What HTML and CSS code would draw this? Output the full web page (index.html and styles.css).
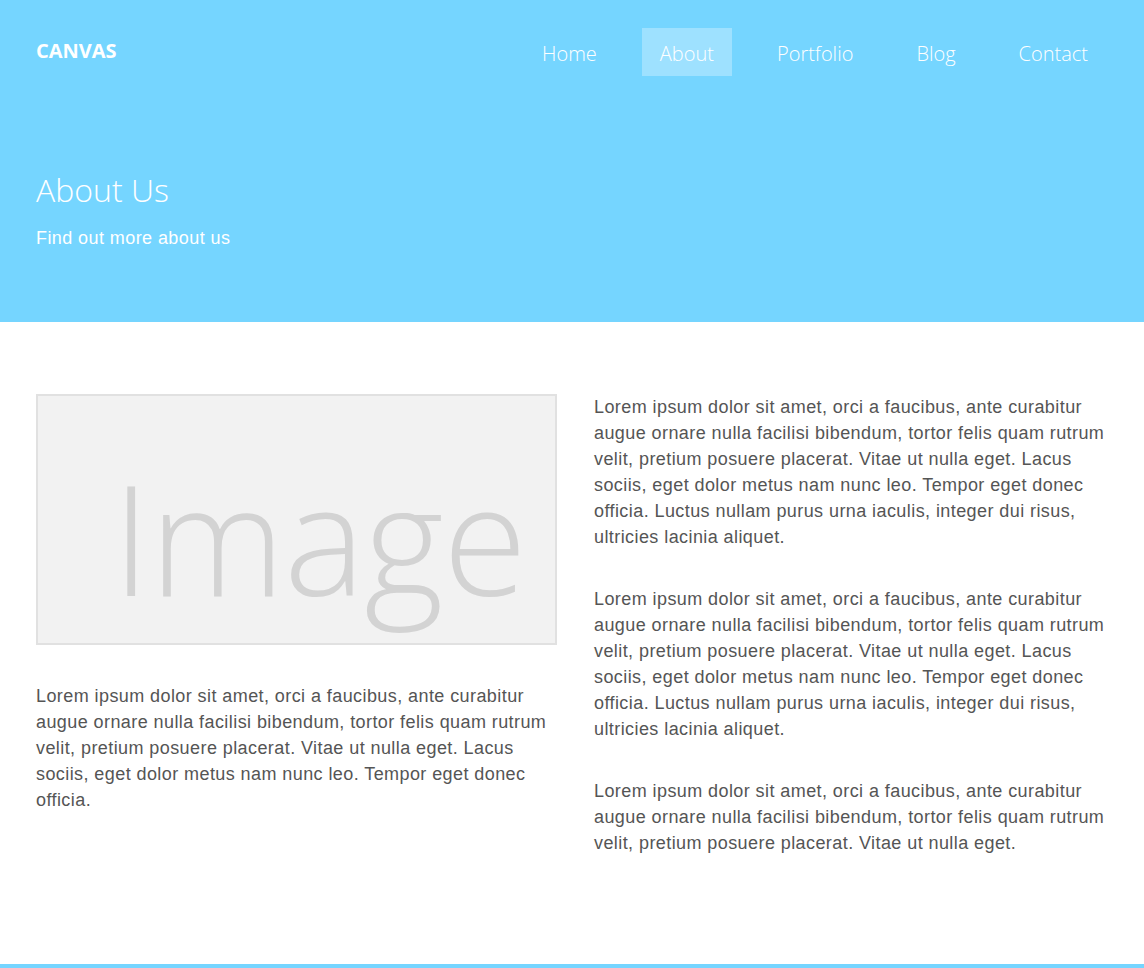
FILE: index.html
```html
<!DOCTYPE html>
<html>
<head>
<meta charset="utf-8">
<link rel="stylesheet" href="styles.css">
</head>
<body>
<header class="hero">
  <div class="topbar">
    <div class="logo">CANVAS</div>
    <nav class="nav">
      <a class="nav-item">Home</a>
      <a class="nav-item active">About</a>
      <a class="nav-item">Portfolio</a>
      <a class="nav-item">Blog</a>
      <a class="nav-item">Contact</a>
    </nav>
  </div>
  <div class="hero-text">
    <h1 class="title">About Us</h1>
    <p class="subtitle">Find out more about us</p>
  </div>
</header>
<main class="content">
  <div class="col col-left">
    <div class="placeholder"><span class="placeholder-text">Image</span></div>
    <p class="para">Lorem ipsum dolor sit amet, orci a faucibus, ante curabitur augue ornare nulla facilisi bibendum, tortor felis quam rutrum velit, pretium posuere placerat. Vitae ut nulla eget. Lacus sociis, eget dolor metus nam nunc leo. Tempor eget donec officia.</p>
  </div>
  <div class="col col-right">
    <p class="para">Lorem ipsum dolor sit amet, orci a faucibus, ante curabitur augue ornare nulla facilisi bibendum, tortor felis quam rutrum velit, pretium posuere placerat. Vitae ut nulla eget. Lacus sociis, eget dolor metus nam nunc leo. Tempor eget donec officia. Luctus nullam purus urna iaculis, integer dui risus, ultricies lacinia aliquet.</p>
    <p class="para">Lorem ipsum dolor sit amet, orci a faucibus, ante curabitur augue ornare nulla facilisi bibendum, tortor felis quam rutrum velit, pretium posuere placerat. Vitae ut nulla eget. Lacus sociis, eget dolor metus nam nunc leo. Tempor eget donec officia. Luctus nullam purus urna iaculis, integer dui risus, ultricies lacinia aliquet.</p>
    <p class="para">Lorem ipsum dolor sit amet, orci a faucibus, ante curabitur augue ornare nulla facilisi bibendum, tortor felis quam rutrum velit, pretium posuere placerat. Vitae ut nulla eget.</p>
  </div>
</main>
<footer class="footer"></footer>
</body>
</html>
```
FILE: styles.css
```css
* { box-sizing: border-box; }
html, body { margin: 0; padding: 0; }
body {
  background: #fff;
  font-family: "Liberation Sans", Arial, sans-serif;
  overflow: hidden;
}
.hero {
  background: #75d5ff;
  height: 322px;
  padding: 28px 36px 0 36px;
}
.topbar {
  display: flex;
  justify-content: space-between;
  align-items: flex-start;
}
.logo {
  font-family: "Open Sans", sans-serif;
  font-weight: 700;
  font-size: 20px;
  color: #fff;
  line-height: 24px;
  margin-top: 11px;
}
.nav {
  display: flex;
  gap: 27px;
  margin-right: 2px;
}
.nav-item {
  font-family: "Open Sans", sans-serif;
  font-weight: 300;
  font-size: 20px;
  color: #fff;
  height: 48px;
  line-height: 44px;
  padding: 4px 18px 0 18px;
}
.nav-item.active {
  background: rgba(255, 255, 255, 0.3);
}
.hero-text {
  margin-top: 92px;
}
.title {
  margin: 0;
  font-family: "Open Sans", sans-serif;
  font-weight: 300;
  font-size: 32px;
  line-height: 44px;
  color: #fff;
}
.subtitle {
  margin: 14px 0 0 0;
  font-size: 18px;
  letter-spacing: 0.42px;
  line-height: 24px;
  color: #fff;
}
.content {
  display: grid;
  grid-template-columns: 521px 1fr;
  gap: 37px;
  padding: 72px 36px 108px 36px;
}
.placeholder {
  height: 251px;
  background: #f2f2f2;
  border: 2px solid #e1e1e1;
  display: flex;
  align-items: flex-start;
  padding-left: 74px;
  overflow: hidden;
}
.placeholder-text {
  font-family: "Open Sans", sans-serif;
  font-weight: 300;
  font-size: 153px;
  letter-spacing: -0.8px;
  line-height: 1;
  color: #d3d3d3;
  margin-top: 64px;
}
.para {
  margin: 0 0 36px 0;
  font-size: 18px;
  letter-spacing: 0.42px;
  line-height: 26px;
  color: #555;
}
.col-left .para {
  margin-top: 38px;
}
.col-right .para:last-child { margin-bottom: 0; }
.footer {
  background: #75d5ff;
  height: 40px;
}
```
